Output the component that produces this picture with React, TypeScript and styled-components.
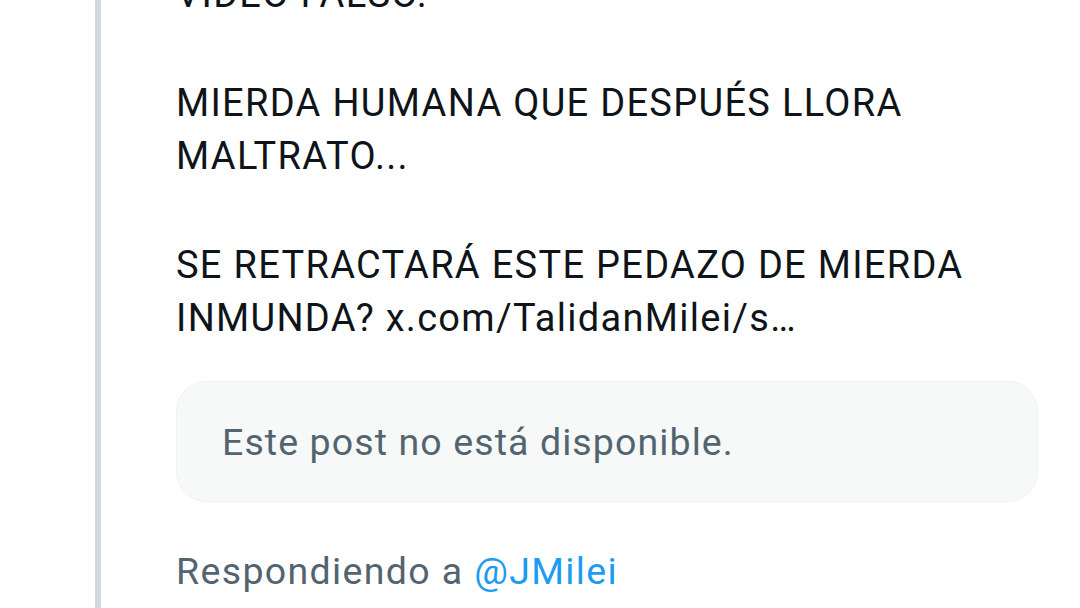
import React from "react";
import styled, { createGlobalStyle } from "styled-components";

const Global = createGlobalStyle`
  html, body { margin: 0; padding: 0; background: #ffffff; }
  body { font-family: Roboto, "Noto Sans", "Liberation Sans", sans-serif; overflow: hidden; }
`;

const Page = styled.div`
  display: flex;
  width: 1080px;
  height: 608px;
  overflow: hidden;
  background: #ffffff;
`;

const Gutter = styled.div`
  width: 95px;
  flex: none;
`;

const Thread = styled.div`
  width: 6px;
  flex: none;
  background: #cfd9de;
  height: 100%;
`;

const Body = styled.div`
  flex: none;
  width: 862px;
  margin-left: 75px;
  margin-top: -32px;
  display: flex;
  flex-direction: column;
`;

const Paragraph = styled.p`
  margin: 0 0 56px 0;
  font-size: 38px;
  line-height: 53px;
  letter-spacing: 1.3px;
  color: #0f1419;
  &:last-of-type { margin-bottom: 0; }
`;

const Unavailable = styled.div`
  box-sizing: border-box;
  margin-top: 36px;
  height: 121px;
  border: 1px solid #eff3f4;
  border-radius: 30px;
  background: #f7f9f9;
  display: flex;
  align-items: center;
  padding-left: 45px;
  font-size: 37.5px;
  letter-spacing: 1.1px;
  color: #536471;
`;

const Replying = styled.div`
  margin-top: 43px;
  font-size: 37.5px;
  line-height: 53px;
  letter-spacing: 1.35px;
  color: #536471;
`;

const Mention = styled.span`
  color: #1d9bf0;
`;

export default function App() {
  return (
    <>
      <Global />
      <Page>
        <Gutter />
        <Thread />
        <Body>
          <Paragraph>VIDEO FALSO.</Paragraph>
          <Paragraph>MIERDA HUMANA QUE DESPUÉS LLORA MALTRATO...</Paragraph>
          <Paragraph>SE RETRACTARÁ ESTE PEDAZO DE MIERDA INMUNDA? x.com/TalidanMilei/s…</Paragraph>
          <Unavailable>Este post no está disponible.</Unavailable>
          <Replying>
            Respondiendo a <Mention>@JMilei</Mention>
          </Replying>
        </Body>
      </Page>
    </>
  );
}
